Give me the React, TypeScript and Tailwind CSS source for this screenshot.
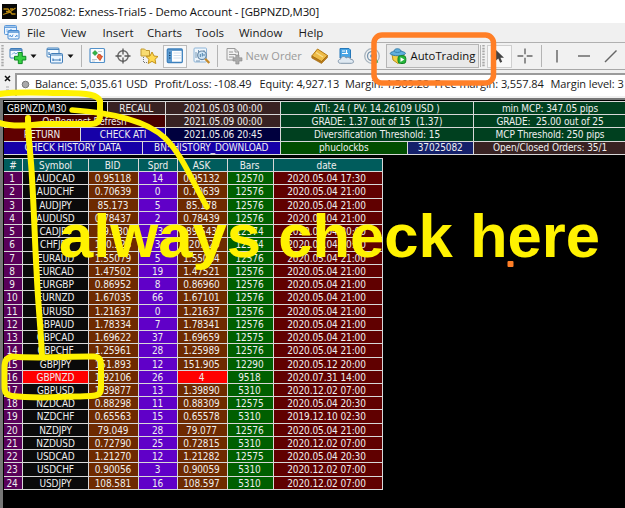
import React from 'react';

type Row = [string, string, string, string, string, string];

const rows: Row[] = [
    ['AUDCAD', '0.95118', '14', '0.95132', '12570', '2020.05.04 17:30'],
    ['AUDCHF', '0.70639', '0', '0.70639', '12576', '2020.05.04 21:00'],
    ['AUDJPY', '85.173', '5', '85.178', '12576', '2020.05.04 21:00'],
    ['AUDUSD', '0.78437', '2', '0.78439', '12576', '2020.05.04 21:00'],
    ['CADJPY', '89.530', '13', '89.543', '12574', '2020.05.04 20:00'],
    ['CHFJPY', '120.526', '3', '120.529', '12574', '2020.05.04 20:00'],
    ['EURAUD', '1.55079', '5', '1.55084', '12576', '2020.05.04 21:00'],
    ['EURCAD', '1.47502', '19', '1.47521', '12576', '2020.05.04 21:00'],
    ['EURGBP', '0.86952', '8', '0.86960', '12576', '2020.05.04 21:00'],
    ['EURNZD', '1.67035', '66', '1.67101', '12576', '2020.05.04 21:00'],
    ['EURUSD', '1.21637', '0', '1.21637', '12576', '2020.05.04 21:00'],
    ['GBPAUD', '1.78334', '7', '1.78341', '12576', '2020.05.04 21:00'],
    ['GBPCAD', '1.69622', '37', '1.69659', '12575', '2020.05.04 21:00'],
    ['GBPCHF', '1.25961', '28', '1.25989', '12576', '2020.05.04 21:00'],
    ['GBPJPY', '151.893', '12', '151.905', '12290', '2020.05.12 20:00'],
    ['GBPNZD', '1.92106', '26', '4', '9518', '2020.07.31 14:00'],
    ['GBPUSD', '1.39877', '13', '1.39890', '5310', '2020.12.02 07:00'],
    ['NZDCAD', '0.88298', '11', '0.88309', '12575', '2020.05.04 20:30'],
    ['NZDCHF', '0.65563', '15', '0.65578', '5310', '2019.12.10 02:30'],
    ['NZDJPY', '79.049', '28', '79.077', '12576', '2020.05.04 21:00'],
    ['NZDUSD', '0.72790', '25', '0.72815', '5310', '2020.12.02 07:00'],
    ['USDCAD', '1.21270', '12', '1.21282', '12575', '2020.05.04 20:30'],
    ['USDCHF', '0.90056', '3', '0.90059', '5310', '2020.12.02 07:00'],
    ['USDJPY', '108.581', '16', '108.597', '5310', '2020.12.02 07:00'],
];

const menu = [
    { label: 'File', w: 'w-[34px]' },
    { label: 'View', w: 'w-[41.5px]' },
    { label: 'Insert', w: 'w-[44.5px]' },
    { label: 'Charts', w: 'w-[48.5px]' },
    { label: 'Tools', w: 'w-[43.5px]' },
    { label: 'Window', w: 'w-[59.5px]' },
    { label: 'Help', w: 'w-[30px]' },
];

const account = [
    { label: 'Balance: 5,035.61 USD', w: 'w-[119.5px]' },
    { label: 'Profit/Loss: -108.49', w: 'w-[105px]' },
    { label: 'Equity: 4,927.13', w: 'w-[85.5px]' },
    { label: 'Margin: 1,369.28', w: 'w-[89.5px]' },
    { label: 'Free margin: 3,557.84', w: 'w-[116px]' },
    { label: 'Margin level: 3', w: 'w-[80px]' },
];

function Sep() {
    return <div className="h-[22px] w-px shrink-0 bg-[#b4b4b4]" />;
}

function Grip() {
    return (
        <svg className="h-[22px] w-[4px] shrink-0" viewBox="0 0 4 22">
            <path d="M1.5 0V22" stroke="#a8a8a8" strokeWidth="2.4" strokeDasharray="1.6 1.2" />
        </svg>
    );
}

function Caret() {
    return (
        <svg className="h-[18px] w-[7px] shrink-0" viewBox="0 0 7 18">
            <path d="M0.5 7.5H6.5L3.5 11Z" fill="#111" />
        </svg>
    );
}

function Icon({ children }: { children: React.ReactNode }) {
    return (
        <svg className="h-[18px] w-[18px] shrink-0" viewBox="0 0 18 18" fill="none">
            {children}
        </svg>
    );
}

function Cell({ w, bg, children, align = 'text-center' }: { w: string; bg: string; children: React.ReactNode; align?: string }) {
    return (
        <div className={`${w} ${bg} ${align} shrink-0 overflow-hidden whitespace-pre border-b border-r border-[#d8d8d8]`}>
            {children}
        </div>
    );
}

function TitleBar() {
    return (
        <div className="flex h-[23px] shrink-0 items-center bg-white pl-[2px]">
            <svg className="h-[15px] w-[15px]" viewBox="0 0 15 15" fill="none">
                <rect width="15" height="15" fill="#080806" />
                <path d="M1.5 5H6L8 7.5M1 10.5L7 8.5L13.5 4M4 7.5H8L10 10H13.5M8 5H11" stroke="#b98a13" strokeWidth="1.3" />
            </svg>
            <span className="ml-[4.5px] whitespace-pre text-[11.4px] tracking-[-0.13px] text-[#111]">
                37025082: Exness-Trial5 - Demo Account - [GBPNZD,M30]
            </span>
        </div>
    );
}

function MenuBar() {
    return (
        <div className="flex h-[20px] shrink-0 items-center border-b border-[#b0b0b0] bg-[#f0f0f0] pl-[3px] text-[11.5px] text-[#1a1a1a]">
            <svg className="mr-[7px] h-[17px] w-[17px]" viewBox="0 0 17 17" fill="none">
                <rect x="1.5" y="1.5" width="12" height="9" rx="1" fill="#e7f3ff" stroke="#5b98d9" />
                <path d="M2 3.2H13" stroke="#5b98d9" strokeWidth="1.4" />
                <path d="M4 8V5M6.5 7L8 5L9.5 7" stroke="#8eb9e6" />
                <rect x="5" y="6.5" width="11" height="8.5" rx="1" fill="#eef7ff" stroke="#4388d0" />
                <path d="M5 8H16" stroke="#4388d0" strokeWidth="1.4" />
                <path d="M7 13V11L9 13L10 10.5M12 13L14 11V13" stroke="#5b98d9" />
            </svg>
            {menu.map((m) => (
                <span key={m.label} className={`${m.w} shrink-0`}>{m.label}</span>
            ))}
        </div>
    );
}

function Toolbar() {
    return (
        <div className="flex h-[27px] shrink-0 items-center border-b border-[#a8a8a8] bg-[#f1f1f1] pl-[1px]">
            <Grip />
            <div className="ml-[4px] flex">
                <Icon>
                    <rect x="1" y="1.5" width="12" height="9.5" rx="1" fill="#f4faff" stroke="#3f7cb8" />
                    <path d="M1 3H13" stroke="#3f7cb8" strokeWidth="1.6" />
                    <path d="M3 7.5L5 5.5L7 7L9 5" stroke="#6ca3d8" />
                    <path d="M9.3 5.5H13.2V9.3H16.8V13H13.2V16.6H9.3V13H5.5V9.3H9.3Z" fill="#38d044" stroke="#0a8a20" />
                </Icon>
            </div>
            <div className="ml-[3px] flex"><Caret /></div>
            <div className="ml-[9px] flex">
                <Icon>
                    <rect x="1" y="1" width="12" height="9" rx="1" fill="#f4faff" stroke="#4a86c0" />
                    <path d="M1 2.4H13M3 7.5H10M3 5V8" stroke="#4a86c0" strokeWidth="1.2" />
                    <rect x="4.5" y="6.5" width="12" height="9.5" rx="1" fill="#eaf5ff" stroke="#3f7cb8" />
                    <path d="M4.5 8H16.5M7 13H14M7 11.5V14M14 11.5V14" stroke="#3f7cb8" strokeWidth="1.2" />
                </Icon>
            </div>
            <div className="ml-[3px] mr-[6.5px] flex"><Caret /></div>
            <Sep />
            <div className="ml-[7px] flex">
                <Icon>
                    <rect x="1" y="1.5" width="14.5" height="14" rx="1" fill="#fbfdff" stroke="#5391c9" strokeWidth="1.2" />
                    <path d="M3 12.5H8M9 4.5H13M3 14H6" stroke="#c4cad0" />
                    <path d="M6 3.5L8.5 6L6 8.5L3.5 6Z" fill="#32b545" stroke="#15852a" strokeWidth=".6" />
                    <path d="M9.5 7.2L12 8V9.3H13.5L11 13.5L8 10Z" fill="#f06a3a" stroke="#c33b16" strokeWidth=".8" />
                </Icon>
            </div>
            <div className="ml-[7px] flex">
                <Icon>
                    <circle cx="9" cy="9" r="5.2" stroke="#666" strokeWidth="1.4" />
                    <path d="M9 1.5V7.5M9 10.5V16.5M1.5 9H7.5M10.5 9H16.5" stroke="#555" strokeWidth="1.3" />
                </Icon>
            </div>
            <div className="ml-[8px] flex">
                <Icon>
                    <path d="M1 2H4.5L6 3.5H9.5V9H1Z" fill="#f8dc72" stroke="#c29b33" />
                    <path d="M3.5 10V15.5H8" stroke="#777" strokeDasharray="1 1" />
                    <path d="M12 5L14 9L18 9.5L15 12.3L15.8 16.5L12 14.4L8.2 16.5L9 12.3L6 9.5L10 9Z" fill="#ffd951" stroke="#c39219" />
                </Icon>
            </div>
            <div className="ml-[5px] flex h-[23px] w-[24px] items-center justify-center border border-[#bcbcbc] bg-[#f8f9fa]">
                <Icon>
                    <rect x="1.3" y="2" width="15" height="13.5" rx="1" fill="#fff" stroke="#3c80bd" strokeWidth="1.3" />
                    <path d="M1.5 3H16" stroke="#3c80bd" strokeWidth="1.5" />
                    <rect x="2" y="3.7" width="4" height="11.3" fill="#5c9cd2" />
                    <path d="M3 6H4.5M3 8.5H4.5M3 11H4.5" stroke="#173c63" />
                    <path d="M7.5 6H15M7.5 8.5H15M7.5 11H15" stroke="#c5d7e8" strokeWidth=".8" />
                </Icon>
            </div>
            <div className="ml-[6px] mr-[6px] flex">
                <Icon>
                    <rect x="1" y="1" width="12.5" height="14" rx="1" fill="#eff6fc" stroke="#8eb5d8" />
                    <path d="M3 5V11M5.5 3V8M3 14H7M11 3V6" stroke="#7797b3" />
                    <circle cx="9" cy="8.3" r="4.3" fill="#cfe5f5" stroke="#6687a5" strokeWidth="1.2" />
                    <path d="M7.3 7V10M9.3 6V9.5M11 7V9" stroke="#4c81ac" />
                    <path d="M12.2 11.8L16.3 16" stroke="#c58a2b" strokeWidth="2.3" />
                </Icon>
            </div>
            <Sep />
            <div className="ml-[8px] flex">
                <Icon>
                    <path d="M1 1.5H9L12.5 5V13H1Z" fill="#f1f1f1" stroke="#9a9a9a" />
                    <path d="M9 1.5V5H12.5M3 5H7M3 7.5H10M3 10H8" stroke="#9a9a9a" />
                    <path d="M9.8 8H13V10.8H16V14H13V17H9.8V14H7V10.8H9.8Z" fill="#aaa" stroke="#888" strokeWidth=".6" />
                </Icon>
            </div>
            <span className="ml-[2px] w-[65px] shrink-0 whitespace-pre text-[11px] text-[#9a9a9a]">New Order</span>
            <Icon>
                <path d="M6.5 2L16.5 8.5L10.5 14.5L0.8 9Z" fill="#eebc48" stroke="#b37913" />
                <path d="M0.8 9V11L10.5 16.5L16.5 10.5V8.5L10.5 14.5Z" fill="#ba7c17" stroke="#9d6710" strokeWidth=".6" />
                <path d="M5 5.5L12 10" stroke="#fae091" strokeWidth="1.3" />
            </Icon>
            <div className="ml-[8px] flex">
                <Icon>
                    <path d="M3 1.5H12L13.5 3V11H3Z" fill="#48a5e5" stroke="#2577b9" />
                    <path d="M5 4H8M5 6.5H11M9.5 3V6" stroke="#fff" strokeWidth="1.2" />
                    <path d="M3.5 16.3C.5 16.3.5 12.3 3.5 12.2C4 9 8 8.7 9 11C11 9.5 13.5 10.5 13.5 12.3C17 12 17.5 16.3 14.5 16.3Z" fill="#dfe9f2" stroke="#8296aa" />
                </Icon>
            </div>
            <div className="ml-[8px] flex">
                <Icon>
                    <circle cx="9" cy="9" r="7.3" stroke="#a8b4be" strokeWidth="1.3" />
                    <circle cx="9" cy="9" r="4.5" stroke="#7895ae" strokeWidth="1.3" />
                    <circle cx="9" cy="9" r="1.8" fill="#398bce" />
                    <path d="M11 10L14 16" stroke="#4aae5d" strokeWidth="3" />
                </Icon>
            </div>
            <div className="ml-[5px] flex h-[24px] w-[93px] shrink-0 items-center border border-[#b5b5b5] bg-[#e9e9e9] pl-[2px]">
                <Icon>
                    <path d="M3 7L4 13L9 16.5L14 13L15 7Z" fill="#f4cf45" stroke="#bb9017" />
                    <path d="M1 6.5C2 4.5 4.5 5 5 4C5.3 1 11.5 1 12 4C13 5 16 4.5 16.5 6.5C15 9.5 3 9.5 1 6.5Z" fill="#61b0dd" stroke="#347da9" />
                    <path d="M5.2 4.5C7 5.8 10 5.8 12 4.5" stroke="#3783b0" />
                    <rect x="9" y="8.7" width="7.8" height="7.8" rx="2.5" fill="#25b53b" stroke="#108423" />
                    <path d="M11.5 10.2V15L15.3 12.6Z" fill="#fff" />
                </Icon>
                <span className="ml-[4px] whitespace-pre text-[11.3px] text-[#111]">AutoTrading</span>
            </div>
            <div className="ml-[1px] flex"><Sep /></div>
            <div className="ml-[1px] flex"><Grip /></div>
            <div className="ml-[1px] flex h-[23px] w-[25px] shrink-0 items-center justify-center border border-[#cfcfcf] bg-[#f8f8f8]">
                <Icon>
                    <path d="M5.5 2.5V14L8.3 11.5L10.2 15.8L12.2 14.8L10.4 10.8H14Z" fill="#444" />
                </Icon>
            </div>
            <div className="ml-[4px] mr-[7px] flex">
                <Icon>
                    <path d="M9 1.5V7.3M9 10.7V16.5M1.5 9H7.3M10.7 9H16.5" stroke="#666" strokeWidth="1.4" />
                </Icon>
            </div>
            <Sep />
            <div className="ml-[6px] flex"><Icon><path d="M9 3V15.5" stroke="#555" strokeWidth="1.3" /></Icon></div>
            <div className="ml-[9px] flex"><Icon><path d="M3 9H15" stroke="#555" strokeWidth="1.3" /></Icon></div>
            <div className="ml-[9px] flex"><Icon><path d="M3 15L14.5 3.5" stroke="#666" strokeWidth="1.4" /></Icon></div>
        </div>
    );
}

function AccountBar() {
    return (
        <div className="flex h-[28px] shrink-0 bg-[#f0f0f0] pt-[3px]">
            <svg className="h-[24px] w-[15px] shrink-0" viewBox="0 0 15 24">
                <path d="M5 3L10 8M10 3L5 8" stroke="#111" strokeWidth="1.5" />
                <path d="M6 14H9M6 17H9" stroke="#aaa" strokeWidth="1.2" />
            </svg>
            <div className="flex h-[23px] min-w-0 grow items-center overflow-hidden border-l-2 border-t-2 border-[#9b9b9b] bg-white pb-[2px] pl-[4px] text-[11px] tracking-[-0.08px] text-[#1a1a1a]">
                <svg className="mr-[5px] h-[9px] w-[9px] shrink-0" viewBox="0 0 9 9">
                    <circle cx="4.5" cy="4.5" r="3.3" fill="#aaa" stroke="#777" />
                </svg>
                {account.map((a) => (
                    <span key={a.label} className={`${a.w} shrink-0 whitespace-pre`}>{a.label}</span>
                ))}
            </div>
        </div>
    );
}

function InfoPanel() {
    const row = 'flex h-[13.2px] w-[623px]';
    return (
        <div className="h-[54px] shrink-0 border-t border-[#d8d8d8]">
            <div className={`${row} leading-[14px]`}>
                <Cell w="w-[103.5px]" bg="bg-black" align="text-left pl-[3px]">GBPNZD,M30</Cell>
                <Cell w="w-[58.5px]" bg="bg-[#382222]">RECALL</Cell>
                <Cell w="w-[115px]" bg="bg-[#382222]">2021.05.03 00:00</Cell>
                <Cell w="w-[193px]" bg="bg-[#00401f]">ATI: 24 ( PV: 14.26109 USD )</Cell>
                <Cell w="w-[153px]" bg="bg-[#00401f]">min MCP: 347.05 pips</Cell>
            </div>
            <div className={`${row} leading-[14px]`}>
                <Cell w="w-[162px]" bg="bg-[#480000]">OnRequest Refresh</Cell>
                <Cell w="w-[115px]" bg="bg-[#382222]">2021.05.09 00:00</Cell>
                <Cell w="w-[193px]" bg="bg-[#00401f]">{'GRADE: 1.37 out of 15  (1.37)'}</Cell>
                <Cell w="w-[153px]" bg="bg-[#00401f]">{'GRADE:  25.00 out of 25'}</Cell>
            </div>
            <div className={`${row} leading-[14px]`}>
                <Cell w="w-[77px]" bg="bg-[#600000]">RETURN</Cell>
                <Cell w="w-[85px]" bg="bg-[#1600a8]">CHECK ATI</Cell>
                <Cell w="w-[115px]" bg="bg-[#00003e]">2021.05.06 20:45</Cell>
                <Cell w="w-[193px]" bg="bg-[#00401f]">Diversification Threshold: 15</Cell>
                <Cell w="w-[153px]" bg="bg-[#00401f]">MCP Threshold: 250 pips</Cell>
            </div>
            {/* tighter leading keeps the underscore inside the cell */}
            <div className={`${row} leading-[12.5px]`}>
                <Cell w="w-[138.5px]" bg="bg-[#1600a8]">CHECK HISTORY DATA</Cell>
                <Cell w="w-[138.5px]" bg="bg-[#1600a8]">BN: HISTORY_DOWNLOAD</Cell>
                <Cell w="w-[126.5px]" bg="bg-[#004d00]">phuclockbs</Cell>
                <Cell w="w-[66.5px]" bg="bg-[#14206a]">37025082</Cell>
                <Cell w="w-[153px]" bg="bg-[#382222]">Open/Closed Orders: 35/1</Cell>
            </div>
        </div>
    );
}

function SymbolTable() {
    const head = 'bg-[#005c5c]';
    return (
        <div className="mt-[3px] w-[379px] border-t border-[#d8d8d8] leading-[14px]">
            <div className="flex h-[13.24px]">
                <Cell w="w-[19px]" bg={head}>#</Cell>
                <Cell w="w-[66px]" bg={head}>Symbol</Cell>
                <Cell w="w-[50px]" bg={head} align="text-center pr-[2px]">BID</Cell>
                <Cell w="w-[39px]" bg={head}>Sprd</Cell>
                <Cell w="w-[50px]" bg={head} align="text-center pr-[2px]">ASK</Cell>
                <Cell w="w-[46px]" bg={head} align="text-center pr-[2px]">Bars</Cell>
                <Cell w="w-[109px]" bg={head} align="text-center pr-[3px]">date</Cell>
            </div>
            {rows.map(([symbol, bid, sprd, ask, bars, date], i) => {
                const hit = symbol === 'GBPNZD';
                return (
                    <div key={symbol} className="flex h-[13.24px]">
                        <Cell w="w-[19px]" bg="bg-[#590059]" align="text-center pr-[2px]">{i + 1}</Cell>
                        <Cell w="w-[66px]" bg={hit ? 'bg-[#ff0000]' : 'bg-[#0a0a0a]'}>{symbol}</Cell>
                        <Cell w="w-[50px]" bg="bg-[#6e2a00]" align="text-center pr-[1px]">{bid}</Cell>
                        <Cell w="w-[39px]" bg="bg-[#6000c8]" align="text-center pr-[1px]">{sprd}</Cell>
                        <Cell w="w-[50px]" bg={hit ? 'bg-[#ff0000]' : 'bg-[#6e2a00]'} align="text-center pr-[2px]">{ask}</Cell>
                        <Cell w="w-[46px]" bg="bg-[#005f00]" align="text-center pr-[2px]">{bars}</Cell>
                        <Cell w="w-[109px]" bg="bg-[#600000]" align="text-center pr-[3px]">{date}</Cell>
                    </div>
                );
            })}
        </div>
    );
}

// Pen marks drawn over the terminal
function Annotations() {
    return (
        <>
            <svg className="pointer-events-none absolute left-0 top-0 h-[508px] w-[625px]" viewBox="0 0 625 508" fill="none" strokeLinecap="round" strokeLinejoin="round">
                <rect x="374" y="35" width="119.5" height="48" rx="8" stroke="#ff7f27" strokeWidth="5.5" />
                <rect x="507.5" y="261" width="6" height="6" rx="1" fill="#ff7f27" />
                <g stroke="#fff200" strokeWidth="6">
                    <path d="M-1 94C18 91 45 93 65 93C88 93 98 95 100 101V115C100 121 97 124 91 124H42C26 126 12 127 0 123" />
                    <path d="M28 118C28 140 31 155 32 178C34 210 35 245 36.5 270C38 305 41 330 42 356" />
                    <path d="M72 110C112 113 146 120 165 138C184 157 193 184 207 207" strokeWidth="5.5" />
                    <path d="M12 356.5C40 359 70 356 94 356.5C101 357 101 361 101 367V388C101 394 98 396 91 396C62 397 35 399 12 396C5 395 4.5 391 4.5 385V368C4.5 361 6 358 12 356.5Z" />
                </g>
            </svg>
            <div className="pointer-events-none absolute left-[59px] top-[201px] whitespace-pre font-['Liberation_Sans',Arial,sans-serif] text-[61.6px] font-bold leading-[70px] text-[#fff200]">
                always check here
            </div>
        </>
    );
}

function App() {
    return (
        <div className="relative flex h-[508px] w-[625px] flex-col overflow-hidden bg-[#f0f0f0] font-['Open_Sans','Noto_Sans',sans-serif]">
            <TitleBar />
            <MenuBar />
            <Toolbar />
            <AccountBar />
            <div className="flex min-h-0 grow flex-col overflow-hidden border-l-[3px] border-t-2 border-[#777] bg-black pl-[1px] pt-[1px] font-['DejaVu_Sans_Condensed','DejaVu_Sans',sans-serif] text-[10px] tracking-[-0.1px] text-[#eee]">
                <InfoPanel />
                <SymbolTable />
            </div>
            <Annotations />
        </div>
    );
}

export default App;
